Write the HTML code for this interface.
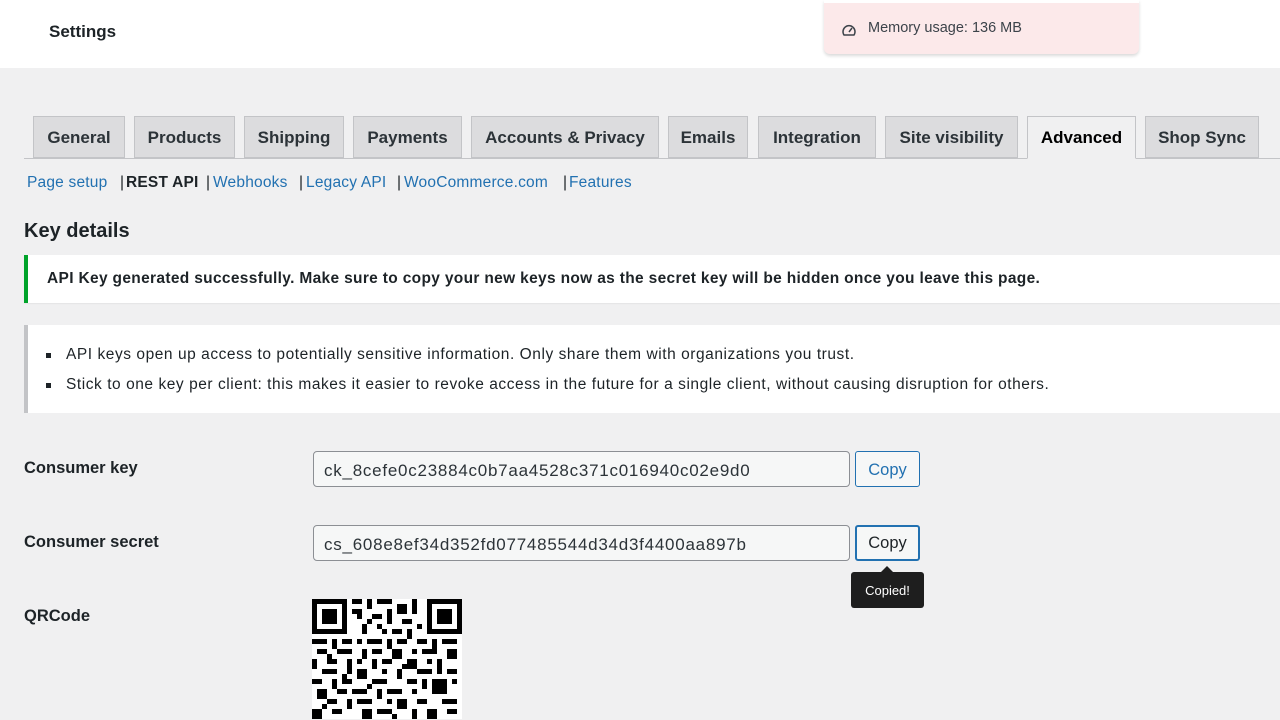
<!DOCTYPE html>
<html><head><style>
body{margin:0;width:1280px;height:720px;overflow:hidden;background:#f0f0f1;font-family:"Liberation Sans",sans-serif;color:#1d2327;position:relative}
.hdr{position:absolute;left:0;top:0;width:1280px;height:68px;background:#fff}
.hdr b{position:absolute;left:49px;top:22px;font-size:17px}
.mem{position:absolute;left:824px;top:0;width:315px;height:54px;background:#fce9ea;border-radius:0 0 6px 6px;box-shadow:0 2px 3px rgba(0,0,0,.15);border-top:3px solid #fff;box-sizing:border-box}
.mem span{position:absolute;left:44px;top:17px;font-size:14.5px;color:#3c434a}
.tabs{position:absolute;left:24px;top:116px;width:1256px;height:42px;border-bottom:1px solid #c3c4c7}
.tab{position:absolute;top:0;height:42px;box-sizing:border-box;background:#dcdcde;border:1px solid #c3c4c7;font-size:17px;font-weight:bold;color:#2c3338;text-align:center;line-height:42px}
.tab.a{background:#f0f0f1;color:#000;border-bottom-color:#f0f0f1;height:43px}
.s{position:absolute;top:174px;font-size:15.5px;color:#2271b1;white-space:nowrap;letter-spacing:.2px}
.p{position:absolute;top:174px;font-size:15.5px;color:#1d2327}
h2{position:absolute;left:24px;top:220px;margin:0;font-size:20px}
.n1{position:absolute;left:24px;top:255px;width:1256px;height:48px;background:#fff;border-left:4px solid #00a32a;box-sizing:border-box;box-shadow:0 1px 1px rgba(0,0,0,.05)}
.n1 b{position:absolute;left:19px;top:15px;font-size:15.5px;letter-spacing:.33px;white-space:nowrap}
.n2{position:absolute;left:24px;top:325px;width:1256px;height:88px;background:#fff;border-left:4px solid #c3c4c7;box-sizing:border-box;font-size:15.5px;letter-spacing:.55px}
.n2 div{position:absolute;left:38px;white-space:nowrap}
.n2 i{position:absolute;left:-20px;top:7px;width:5px;height:5px;background:#1d2327}
.lbl{position:absolute;left:24px;font-size:16.5px;font-weight:bold}
.inp{position:absolute;left:313px;width:537px;height:36px;box-sizing:border-box;border:1px solid #8c8f94;border-radius:4px;background:#f6f7f7;font-size:17px;letter-spacing:.75px;padding:9px 10px 0;color:#2c3338;white-space:nowrap}
.btn{position:absolute;left:855px;width:65px;height:36px;box-sizing:border-box;border:1px solid #2271b1;border-radius:3px;background:#f6f7f7;color:#2271b1;font-size:16.5px;text-align:center;line-height:36px}
.tip{position:absolute;left:851px;top:572px;width:73px;height:36px;background:#1e1e1e;border-radius:3px;color:#fff;font-size:13px;text-align:center;line-height:37px}
.tip:before{content:"";position:absolute;left:30px;top:-6px;border:6px solid transparent;border-top:0;border-bottom-color:#1e1e1e}
</style></head><body>
<div class="hdr"><b>Settings</b></div>
<div class="mem"><svg style="position:absolute;left:17px;top:19px" width="16" height="16" viewBox="0 0 16 16" fill="none" stroke="#3c434a" stroke-width="1.5"><path d="M3 13A6 6 0 1 1 13 13Z"/><path d="M8 10l3-4"/></svg><span>Memory usage: 136 MB</span></div>
<div class="tabs">
<div class="tab" style="left:9px;width:92px">General</div>
<div class="tab" style="left:110px;width:101px">Products</div>
<div class="tab" style="left:220px;width:100px">Shipping</div>
<div class="tab" style="left:329px;width:109px">Payments</div>
<div class="tab" style="left:447px;width:188px">Accounts &amp; Privacy</div>
<div class="tab" style="left:644px;width:80px">Emails</div>
<div class="tab" style="left:734px;width:118px">Integration</div>
<div class="tab" style="left:861px;width:133px">Site visibility</div>
<div class="tab a" style="left:1003px;width:109px">Advanced</div>
<div class="tab" style="left:1121px;width:114px">Shop Sync</div>
</div>
<span class="s" style="left:27px">Page setup</span><span class="p" style="left:120px">|</span>
<b class="s" style="left:126px;color:#1d2327">REST API</b><span class="p" style="left:206px">|</span>
<span class="s" style="left:213px">Webhooks</span><span class="p" style="left:299px">|</span>
<span class="s" style="left:306px">Legacy API</span><span class="p" style="left:397px">|</span>
<span class="s" style="left:404px">WooCommerce.com</span><span class="p" style="left:563px">|</span>
<span class="s" style="left:569px">Features</span>
<h2>Key details</h2>
<div class="n1"><b>API Key generated successfully. Make sure to copy your new keys now as the secret key will be hidden once you leave this page.</b></div>
<div class="n2"><div style="top:21px"><i></i>API keys open up access to potentially sensitive information. Only share them with organizations you trust.</div><div style="top:51px"><i></i>Stick to one key per client: this makes it easier to revoke access in the future for a single client, without causing disruption for others.</div></div>
<div class="lbl" style="top:459px">Consumer key</div>
<div class="inp" style="top:451px">ck_8cefe0c23884c0b7aa4528c371c016940c02e9d0</div>
<div class="btn" style="top:451px">Copy</div>
<div class="lbl" style="top:533px">Consumer secret</div>
<div class="inp" style="top:525px">cs_608e8ef34d352fd077485544d34d3f4400aa897b</div>
<div class="btn" style="top:525px;border-width:2px;line-height:33px;color:#1d2327">Copy</div>
<div class="tip">Copied!</div>
<div class="lbl" style="top:607px">QRCode</div>
<svg style="position:absolute;left:312px;top:598px" width="150" height="122" viewBox="0 0 30 24" shape-rendering="crispEdges">
<rect width="30" height="24" fill="#fff"/>
<g fill="#000">
<path d="M8 0h2v1h-2zM11 0h1v2h-1zM13 0h3v1h-3zM17 1h2v2h-2zM20 0h1v3h-1zM9 2h1v2h-1zM12 3h2v1h-2zM15 2h1v3h-1zM18 4h2v1h-2zM10 5h1v2h-1zM13 5h1v1h-1zM16 6h2v1h-2zM19 6h1v2h-1zM0 8h3v1h-3zM4 8h1v2h-1zM6 8h2v1h-2zM9 8h1v1h-1zM11 8h3v1h-3zM15 8h1v2h-1zM17 8h2v1h-2zM21 8h2v1h-2zM24 8h1v2h-1zM26 8h3v1h-3zM1 10h2v1h-2zM5 10h3v1h-3zM10 10h1v2h-1zM12 10h2v1h-2zM16 10h2v2h-2zM20 10h1v1h-1zM22 10h3v1h-3zM27 10h2v2h-2zM0 12h1v2h-1zM3 12h2v1h-2zM7 12h1v3h-1zM9 12h1v1h-1zM12 12h1v2h-1zM14 12h2v1h-2zM19 12h2v2h-2zM23 12h1v1h-1zM25 12h1v3h-1zM2 14h3v1h-3zM9 14h2v2h-2zM14 14h1v1h-1zM17 14h1v2h-1zM21 14h3v1h-3zM27 14h2v1h-2zM0 16h2v1h-2zM4 16h1v2h-1zM6 16h2v1h-2zM12 16h3v1h-3zM19 16h2v1h-2zM22 16h1v2h-1zM24 16h3v3h-3zM28 16h1v1h-1zM1 18h2v2h-2zM5 18h2v1h-2zM8 18h3v1h-3zM13 18h1v2h-1zM15 18h3v1h-3zM20 18h1v1h-1zM3 20h2v1h-2zM7 20h1v2h-1zM9 20h3v1h-3zM15 20h1v1h-1zM17 20h2v2h-2zM21 20h2v1h-2zM26 20h3v1h-3zM0 22h2v2h-2zM4 22h2v1h-2zM10 22h2v2h-2zM13 22h3v1h-3zM20 22h1v2h-1zM23 22h2v2h-2zM27 22h2v1h-2zM8 2h1v1h-1zM11 4h1v1h-1zM14 6h1v1h-1zM21 5h1v1h-1zM3 11h1v1h-1zM18 13h1v1h-1zM6 15h1v1h-1zM11 17h1v1h-1zM2 21h1v1h-1zM16 23h1v1h-1z"/>
<path d="M0 0h7v7h-7zM1 1v5h5v-5z M2 2h3v3h-3z"/>
<path d="M23 0h7v7h-7zM24 1v5h5v-5z M25 2h3v3h-3z"/>
</g></svg>
</body></html>
